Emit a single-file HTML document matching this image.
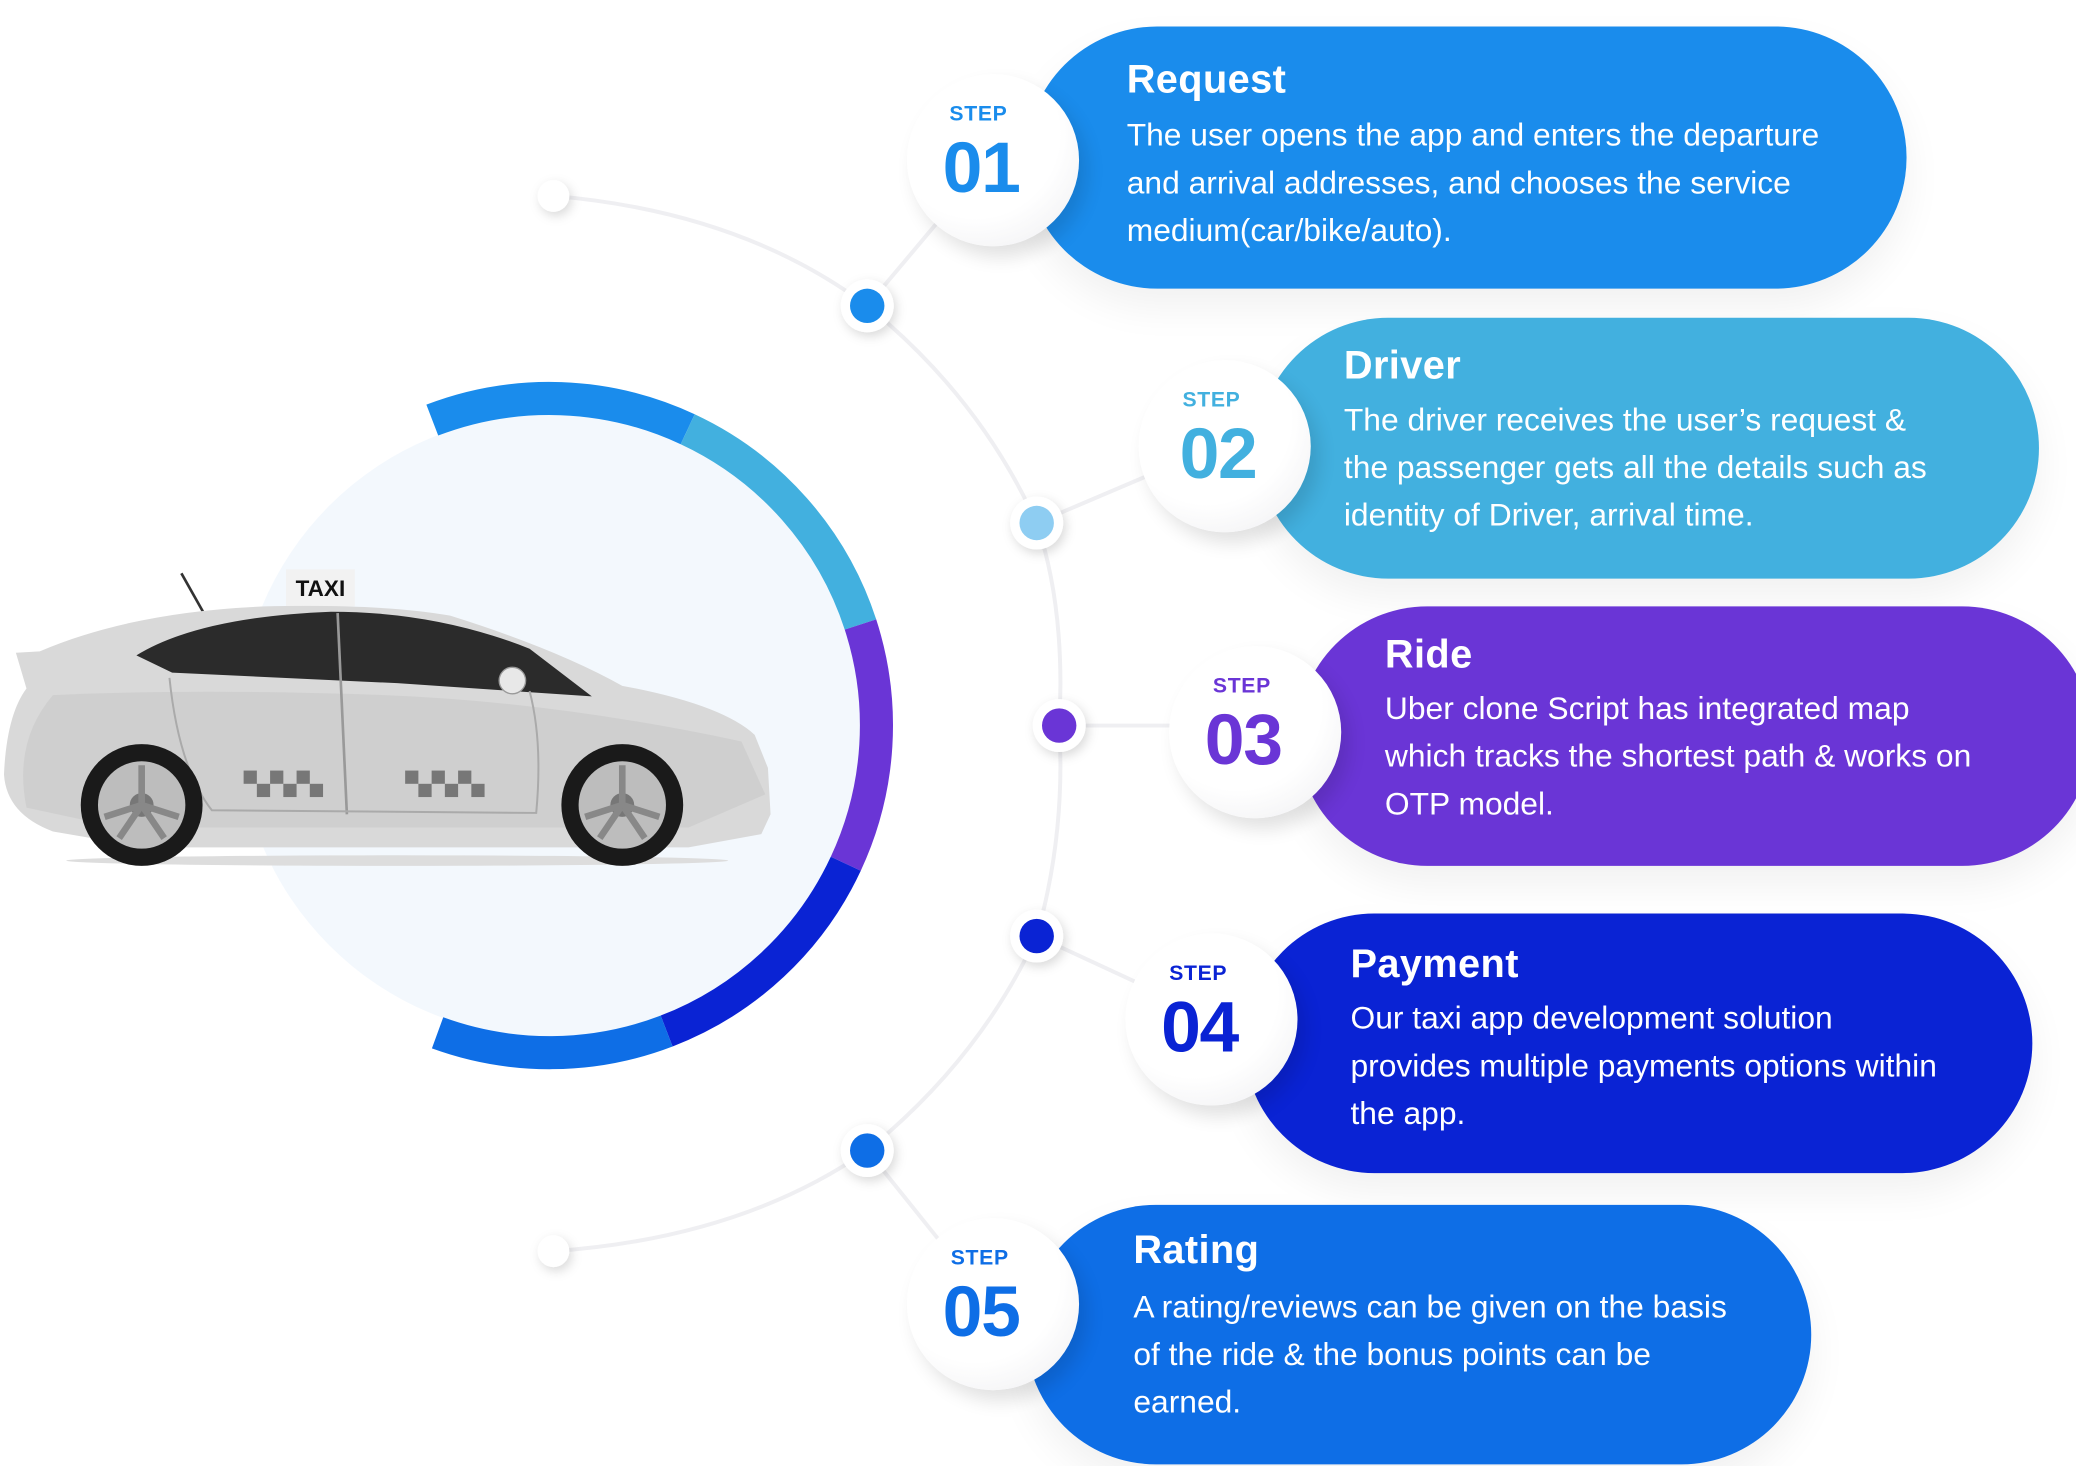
<!DOCTYPE html>
<html><head><meta charset="utf-8"><style>
html,body{margin:0;padding:0;background:#fff;}
body{width:2076px;height:1466px;overflow:hidden;position:relative;font-family:"Liberation Sans",Arial,sans-serif;}
#w{position:absolute;left:0;top:0;width:1568px;height:1107px;transform:scale(1.324);transform-origin:0 0;}
.pill{position:absolute;border-radius:100px;color:#fff;box-shadow:0 14px 30px rgba(0,0,0,0.06);}
.pill h3{position:absolute;margin:0;font-size:30px;font-weight:bold;letter-spacing:0.3px;}
.pill p{position:absolute;margin:0;font-size:24px;line-height:36px;}
.step{position:absolute;width:130px;height:130px;border-radius:50%;background:radial-gradient(circle at 40% 35%,#fff 55%,#ececef 100%);box-shadow:6px 8px 14px rgba(0,0,0,0.12);text-align:center;}
.step .s{position:absolute;left:0;right:0;top:22px;font-size:16px;font-weight:bold;letter-spacing:0.5px;}
.step .n{position:absolute;left:0;right:0;top:40px;font-size:54px;font-weight:900;letter-spacing:-1px;}
</style></head><body><div id="w">
<svg width="1568" height="1107" style="position:absolute;left:0;top:0">
<defs><filter id="sh" x="-50%" y="-50%" width="200%" height="200%"><feDropShadow dx="2" dy="3" stdDeviation="4" flood-color="#000" flood-opacity="0.15"/></filter></defs>
<path d="M418 148 Q560 160 655 231 Q740 300 783 395 Q805 460 800 548 Q805 630 783 707 Q740 800 655 869 Q560 935 418 945" fill="none" stroke="#efeff2" stroke-width="3"/>
<g stroke="#efeff2" stroke-width="3">
<line x1="655" y1="231" x2="708" y2="168"/><line x1="783" y1="395" x2="870" y2="358"/>
<line x1="800" y1="548" x2="885" y2="548"/><line x1="783" y1="707" x2="865" y2="745"/>
<line x1="655" y1="869" x2="712" y2="940"/></g>
<circle cx="418" cy="148" r="12" fill="#fff" filter="url(#sh)"/>
<circle cx="418" cy="945" r="12" fill="#fff" filter="url(#sh)"/>
<g filter="url(#sh)" fill="#fff"><circle cx="655" cy="231" r="20"/><circle cx="783" cy="395" r="20"/><circle cx="800" cy="548" r="20"/><circle cx="783" cy="707" r="20"/><circle cx="655" cy="869" r="20"/></g>
<circle cx="655" cy="231" r="13" fill="#1a8cec"/><circle cx="783" cy="395" r="13" fill="#8ecdf2"/><circle cx="800" cy="548" r="13" fill="#6a35d6"/><circle cx="783" cy="707" r="13" fill="#0a23d4"/><circle cx="655" cy="869" r="13" fill="#0e6ee6"/>
<circle cx="415" cy="548" r="235" fill="#f3f8fd"/>
<g fill="none" stroke-width="25">
<path d="M326.5 317.3 A247 247 0 0 1 519.4 324.2" stroke="#1a8cec"/>
<path d="M519.4 324.2 A247 247 0 0 1 649.9 471.7" stroke="#42b0df"/>
<path d="M649.9 471.7 A247 247 0 0 1 638.8 652.4" stroke="#6a35d6"/>
<path d="M638.8 652.4 A247 247 0 0 1 503.5 778.7" stroke="#0a23d4"/>
<path d="M503.5 778.7 A247 247 0 0 1 330.5 780.1" stroke="#0e6ee6"/>
</g>
<ellipse cx="300" cy="650" rx="250" ry="4" fill="#ddd"/>
<line x1="137" y1="433" x2="155" y2="465" stroke="#333" stroke-width="2"/>
<rect x="216" y="430" width="52" height="28" fill="#f2f2f2"/>
<text x="242" y="450" font-size="17" font-weight="bold" text-anchor="middle" fill="#111" font-family="Liberation Sans,sans-serif">TAXI</text>
<path d="M12 493 L30 492 Q100 462 200 458 Q290 456 340 465 Q420 490 470 518 Q545 532 570 555 L580 580 L582 615 L575 630 L520 640 L110 640 L40 628 Q5 615 3 585 Q5 540 20 520 Z" fill="#d9d9d9"/>
<path d="M40 525 Q150 520 290 525 Q420 530 560 560 L578 600 L520 625 L90 625 L20 610 Q10 560 40 525Z" fill="#c8c8c8" opacity="0.6"/>
<path d="M103 495 Q150 466 250 462 Q330 462 400 490 L447 526 L300 516 L130 508 Z" fill="#2b2b2b"/>
<line x1="255" y1="463" x2="262" y2="615" stroke="#999" stroke-width="2"/>
<path d="M128 512 Q135 580 160 612 L405 614 Q410 560 400 522" fill="none" stroke="#aaa" stroke-width="1.5"/>
<g fill="#777"><rect x="184" y="582" width="10" height="10"/><rect x="194" y="592" width="10" height="10"/><rect x="204" y="582" width="10" height="10"/><rect x="214" y="592" width="10" height="10"/><rect x="224" y="582" width="10" height="10"/><rect x="234" y="592" width="10" height="10"/>
<rect x="306" y="582" width="10" height="10"/><rect x="316" y="592" width="10" height="10"/><rect x="326" y="582" width="10" height="10"/><rect x="336" y="592" width="10" height="10"/><rect x="346" y="582" width="10" height="10"/><rect x="356" y="592" width="10" height="10"/></g>
<circle cx="387" cy="514" r="10" fill="#e8e8e8" stroke="#999"/>
<g><circle cx="107" cy="608" r="46" fill="#1a1a1a"/><circle cx="107" cy="608" r="33" fill="#bdbdbd"/><circle cx="107" cy="608" r="9" fill="#777"/>
<circle cx="470" cy="608" r="46" fill="#1a1a1a"/><circle cx="470" cy="608" r="33" fill="#bdbdbd"/><circle cx="470" cy="608" r="9" fill="#777"/></g>
<g stroke="#888" stroke-width="5"><line x1="107" y1="608" x2="107" y2="578"/><line x1="107" y1="608" x2="135" y2="617"/><line x1="107" y1="608" x2="124" y2="633"/><line x1="107" y1="608" x2="90" y2="633"/><line x1="107" y1="608" x2="79" y2="617"/>
<line x1="470" y1="608" x2="470" y2="578"/><line x1="470" y1="608" x2="498" y2="617"/><line x1="470" y1="608" x2="487" y2="633"/><line x1="470" y1="608" x2="453" y2="633"/><line x1="470" y1="608" x2="442" y2="617"/></g>
</svg>

<div class="pill" style="left:775px;top:20px;width:665px;height:198px;background:#1a8cec">
<h3 style="left:76px;top:24px">Request</h3>
<p style="left:76px;top:65px">The user opens the app and enters the departure<br>and arrival addresses, and chooses the service<br>medium(car/bike/auto).</p></div>
<div class="pill" style="left:950px;top:240px;width:590px;height:197px;background:#42b0df">
<h3 style="left:65px;top:20px">Driver</h3>
<p style="left:65px;top:60px">The driver receives the user’s request &amp;<br>the passenger gets all the details such as<br>identity of Driver, arrival time.</p></div>
<div class="pill" style="left:980px;top:458px;width:600px;height:196px;background:#6a35d6">
<h3 style="left:66px;top:20px">Ride</h3>
<p style="left:66px;top:60px">Uber clone Script has integrated map<br>which tracks the shortest path &amp; works on<br>OTP model.</p></div>
<div class="pill" style="left:940px;top:690px;width:595px;height:196px;background:#0a23d4">
<h3 style="left:80px;top:22px">Payment</h3>
<p style="left:80px;top:62px">Our taxi app development solution<br>provides multiple payments options within<br>the app.</p></div>
<div class="pill" style="left:775px;top:910px;width:593px;height:196px;background:#0e6ee6">
<h3 style="left:81px;top:18px">Rating</h3>
<p style="left:81px;top:60px">A rating/reviews can be given on the basis<br>of the ride &amp; the bonus points can be<br>earned.</p></div>

<div class="step" style="left:685px;top:56px;color:#1a8cec"><div class="s" style="left:-22px">STEP</div><div class="n" style="left:-18px">01</div></div>
<div class="step" style="left:860px;top:272px;color:#42b0df"><div class="s" style="left:-20px">STEP</div><div class="n" style="left:-10px">02</div></div>
<div class="step" style="left:883px;top:488px;color:#6a35d6"><div class="s" style="left:-20px">STEP</div><div class="n" style="left:-18px">03</div></div>
<div class="step" style="left:850px;top:705px;color:#0a23d4"><div class="s" style="left:-20px">STEP</div><div class="n" style="left:-18px">04</div></div>
<div class="step" style="left:685px;top:920px;color:#0e6ee6"><div class="s" style="left:-20px">STEP</div><div class="n" style="left:-18px">05</div></div>
</div></body></html>
